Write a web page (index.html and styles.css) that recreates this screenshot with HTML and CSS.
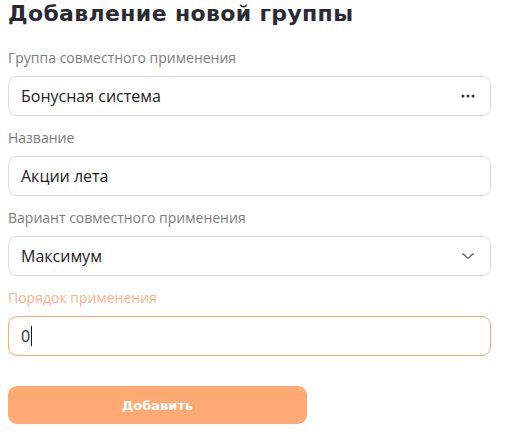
FILE: index.html
```html
<!DOCTYPE html>
<html lang="ru">
<head>
<meta charset="utf-8">
<link rel="stylesheet" href="styles.css">
</head>
<body>
<div class="page">
  <h1 class="title">Добавление новой группы</h1>
  <form class="form">
    <div class="field">
      <div class="label">Группа совместного применения</div>
      <div class="box">
        <span class="value">Бонусная система</span>
        <svg class="icon" width="14" height="4" viewBox="0 0 14 4"><circle cx="2" cy="2" r="1.5" fill="#333"/><circle cx="7" cy="2" r="1.5" fill="#333"/><circle cx="12" cy="2" r="1.5" fill="#333"/></svg>
      </div>
    </div>
    <div class="field">
      <div class="label">Название</div>
      <div class="box"><span class="value">Акции лета</span></div>
    </div>
    <div class="field">
      <div class="label">Вариант совместного применения</div>
      <div class="box">
        <span class="value">Максимум</span>
        <svg class="icon icon-chevron" width="12" height="6" viewBox="0 0 12 6"><path d="M0.5 0.5 L6 5.3 L11.5 0.5" fill="none" stroke="#444" stroke-width="1.1"/></svg>
      </div>
    </div>
    <div class="field">
      <div class="label label-active">Порядок применения</div>
      <div class="box box-active"><span class="value">0</span><span class="caret"></span></div>
    </div>
    <button type="button" class="submit">Добавить</button>
  </form>
</div>
</body>
</html>
```
FILE: styles.css
```css
* { box-sizing: border-box; }
html, body { margin: 0; padding: 0; background: #fff; }
.page {
  padding: 0 8px;
  width: 500px;
  font-family: "Open Sans", "Noto Sans", sans-serif;
}
.title {
  margin: 0 0 4px;
  height: 28px;
  line-height: 28px;
  font-family: "DejaVu Sans", sans-serif;
  font-weight: 700;
  font-size: 22px;
  letter-spacing: 0.35px;
  color: #2b2b33;
}
.form {
  display: flex;
  flex-direction: column;
  padding-top: 16px;
}
.field {
  display: flex;
  flex-direction: column;
  gap: 8px;
  margin-bottom: 12px;
}
.label {
  height: 20px;
  line-height: 20px;
  font-size: 14px;
  color: #7d7d7d;
}
.label-active { color: #ffb28a; }
.box {
  height: 40px;
  width: 483px;
  border: 1px solid #dcdcdc;
  border-radius: 9px;
  display: flex;
  align-items: center;
  padding: 0 15px 0 12px;
}
.box-active { border-color: #ffa96e; }
.value {
  font-size: 16px;
  color: #222;
  flex: 1;
  line-height: 22px;
}
.box-active .value { flex: 0 0 auto; color: #1f2a36; }
.caret {
  width: 1px;
  height: 20px;
  background: #111;
  margin-left: 1px;
}
.icon-chevron { margin-right: 1px; }
.submit {
  margin-top: 18px;
  width: 299px;
  height: 38px;
  border: none;
  border-radius: 9px;
  background: #ffaa75;
  color: #fff;
  font-family: "DejaVu Sans", sans-serif;
  font-weight: 700;
  font-size: 13px;
  cursor: pointer;
}
```
